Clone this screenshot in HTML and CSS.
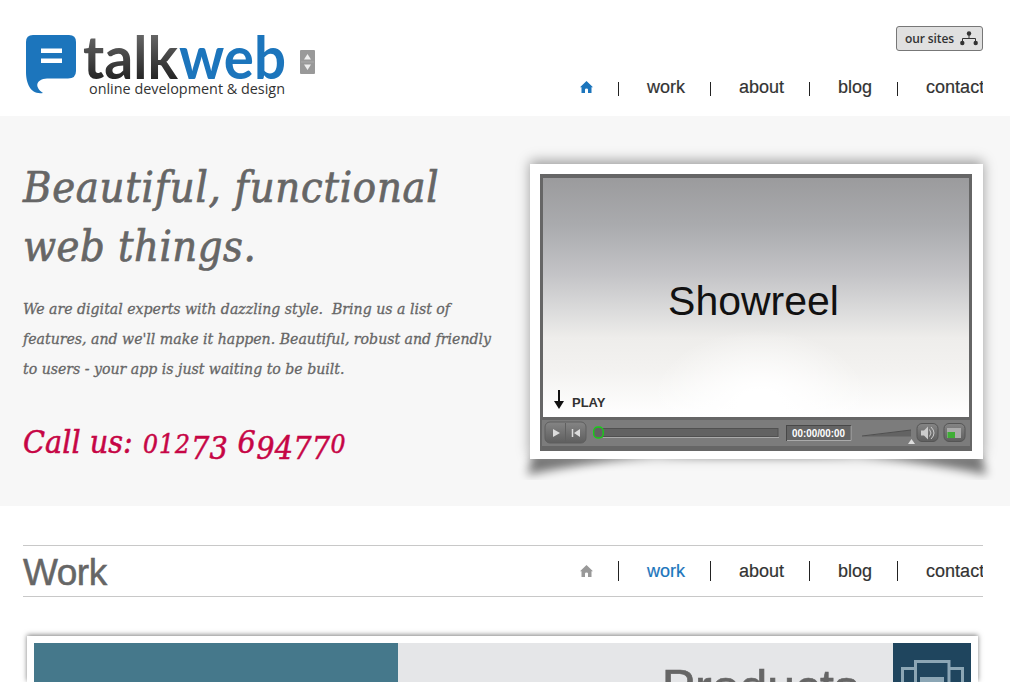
FILE: index.html
```html
<!DOCTYPE html>
<html lang="en">
<head>
<meta charset="utf-8">
<title>talkweb</title>
<link rel="stylesheet" href="styles.css">
</head>
<body>
<svg class="defs" width="0" height="0">
  <symbol id="home" viewBox="0 0 13 12"><path d="M6.500 0L13 6.300h-1.500V12H8V8.500q0-1-1.500-1T5 8.500V12H1.500V6.300H0z" fill="currentColor"/></symbol>
</svg>
<header class="header">
  <div class="brand">
    <svg class="logo" width="262" height="70" viewBox="0 0 262 70">
      <defs><linearGradient id="ink" x1="0" y1="0" x2="0" y2="1"><stop offset=".2" stop-color="#666"/><stop offset=".85" stop-color="#222"/></linearGradient></defs>
      <path d="M10 5H46Q53 5 53 12V41Q53 48.500 45 48.500H24C13 49 11 57 20 63C8 65 3 54 3 42V12Q3 5 10 5Z" fill="#1c75bc"/>
      <path d="M18 18.500h21v4.500H18zM18 28.500h21v4.500H18z" fill="#fff"/>
      <text class="word" x="60" y="49" textLength="95" lengthAdjust="spacingAndGlyphs" fill="url(#ink)">talk</text>
      <text class="word" x="156" y="49" textLength="107" lengthAdjust="spacingAndGlyphs" fill="#1c75bc">web</text>
      <text class="strap" x="66" y="64" textLength="196" lengthAdjust="spacingAndGlyphs">online development &amp; design</text>
    </svg>
    <svg class="switch" width="15" height="24" viewBox="0 0 15 24"><rect width="15" height="24" rx="1" fill="#999"/><path d="M4 9.500L7.500 4L11 9.500zM4 14.500h7L7.500 20z" fill="#eee"/><path d="M1 12h13" stroke="#aaa"/></svg>
  </div>
  <div class="tools">
    <a class="sites"><span>our sites</span>
      <svg width="18" height="15" viewBox="0 0 18 15"><path d="M9 3V7.500M2.500 12V7.500H15.500V12" fill="none" stroke="#333"/><g fill="#333"><circle cx="9" cy="2.500" r="2.200"/><circle cx="2.300" cy="12" r="2.200"/><circle cx="15.700" cy="12" r="2.200"/></g></svg>
    </a>
    <nav class="nav top">
      <svg class="home" width="13" height="12"><use href="#home"/></svg><i></i><a>work</a><i></i><a>about</a><i></i><a>blog</a><i></i><a>contact</a>
    </nav>
  </div>
</header>
<main>
<section class="hero">
  <div class="intro">
    <h1><span class="l1">Beautiful, functional</span><br><span class="l2">web things.</span></h1>
    <p>We are digital experts with dazzling style.&nbsp; Bring us a list of<br>features, and we'll make it happen. Beautiful, robust and friendly<br>to users - your app is just waiting to be built.</p>
    <div class="call"><span class="label">Call us:</span><span class="num"><b>012</b><s>73</s> 6<s>9477</s><b>0</b></span></div>
  </div>
  <div class="frame">
    <svg class="curl" width="500" height="45" viewBox="0 0 500 45">
      <defs><filter id="soft" x="-20%" y="-50%" width="140%" height="200%"><feGaussianBlur stdDeviation="5"/></filter></defs>
      <path d="M26 20H474L480 40Q360 15 250 15Q140 15 20 40Z" fill="#000" opacity=".5" filter="url(#soft)"/>
    </svg>
    <div class="player">
      <div class="screen"><strong>Showreel</strong><div class="play"><svg width="12" height="20" viewBox="0 0 12 20"><path d="M6 0V14" stroke="#111" stroke-width="2"/><path d="M1 11h10L6 19z" fill="#111"/></svg><span>PLAY</span></div></div>
      <svg class="controls" width="432" height="34" viewBox="0 0 432 34">
        <defs><linearGradient id="btn" x1="0" y1="0" x2="0" y2="1"><stop stop-color="#858585"/><stop offset="1" stop-color="#5e5e5e"/></linearGradient></defs>
        <rect width="432" height="34" fill="#666"/><rect x="2" y="3" width="428" height="26" fill="#7c7c7c"/>
        <rect x="5" y="5" width="41" height="21" rx="5" fill="url(#btn)" stroke="#5e5e5e"/><path d="M25.500 6v19" stroke="#606060"/>
        <path d="M13 12v8l7-4zM34 16l6-4v8z" fill="#ddd"/><path d="M32.500 12v8" stroke="#ddd" stroke-width="1.500"/>
        <rect x="56" y="11.500" width="182" height="8" fill="#626262" stroke="#505050"/><path d="M63 20.500H239" stroke="#aaa"/>
        <rect x="53.700" y="10" width="9.500" height="11" rx="4" fill="#626262" stroke="#15d015" stroke-width="1.400"/>
        <rect x="246.500" y="8.500" width="64" height="15" fill="#646464" stroke="#484848"/><path d="M247 23.500h64V9" fill="none" stroke="#aaa"/>
        <text class="time" x="252" y="20" textLength="53" lengthAdjust="spacingAndGlyphs">00:00/00:00</text>
        <path d="M322 19.500L371 13v6.500z" fill="#636363"/><path d="M322 19L371 13" stroke="#505050"/><path d="M368 27l3.500-5 3.500 5z" fill="#ddd"/>
        <rect x="377" y="6.500" width="21" height="18" rx="5" fill="url(#btn)" stroke="#555"/><path d="M381 13.500h3l4-4v13l-4-4h-3z" fill="#ccc"/><path d="M389.500 12.500q3 3.500 0 7M391 10q6 6 0 12" fill="none" stroke="#ccc"/>
        <rect x="404" y="6.500" width="21" height="18" rx="5" fill="url(#btn)" stroke="#555"/><rect x="407" y="11" width="14" height="10" fill="#aaa"/><rect x="407.500" y="15" width="7.500" height="6" fill="#3fae36"/>
      </svg>
    </div>
  </div>
</section>
<section class="work">
  <div class="bar"><h2>Work</h2>
    <nav class="nav">
      <svg class="home" width="13" height="12"><use href="#home"/></svg><i></i><a class="on">work</a><i></i><a>about</a><i></i><a>blog</a><i></i><a>contact</a>
    </nav>
  </div>
  <div class="card"><div class="teal"></div><div class="title">Products</div>
    <div class="tile"><svg width="78" height="39" viewBox="0 0 78 39"><path d="M22 25.500H9.500V40M56 25.500H69.500V40M22.500 40V18.500H56V40" fill="none" stroke="#8ba6b5" stroke-width="3"/><path d="M27 34h24v5H27z" fill="#8ba6b5"/></svg></div>
  </div>
</section>
</main>
</body>
</html>
```
FILE: styles.css
```css
* { box-sizing: border-box; }
body { margin: 0; height: 682px; overflow: hidden; background: #fff; color: #333; font-family: "Liberation Sans", Arial, sans-serif; }
h1, h2, p { margin: 0; font-weight: normal; }
.defs { display: block; height: 0; }
.header { height: 116px; padding: 0 27px 0 23px; display: flex; justify-content: space-between; }
.brand { display: flex; align-items: flex-start; gap: 15px; padding-top: 30px; }
.logo { overflow: visible; }
.switch { margin-top: 20px; }
.word { font: bold 60px Lato, sans-serif; }
.strap { font: 14.5px "Open Sans", sans-serif; fill: #333; }
.tools { display: flex; flex-direction: column; align-items: flex-end; padding-top: 26px; width: 403px; }
.sites { display: flex; align-items: center; justify-content: space-between; width: 87px; height: 25px; padding: 0 4px 0 8px; border: 1px solid #777; border-radius: 3px; background: #e0e0e0; font: 600 12px "Open Sans", sans-serif; letter-spacing: -0.1px; white-space: nowrap; }
.nav { display: flex; align-items: center; width: 403px; height: 50px; overflow: hidden; font-size: 18px; white-space: nowrap; }
.nav svg { margin-right: 25px; flex: none; color: #999; }
.nav i { width: 1px; height: 20px; flex: none; background: #222; margin-right: 28px; }
.nav a { margin-right: 25px; -webkit-text-stroke: .2px; }
.nav a:last-child { margin-right: 0; }
.nav .on { color: #1c75bc; }
.top { height: 24px; margin-top: 24px; }
.top svg { color: #1c75bc; }
.top i { height: 14px; margin-top: 4px; }
.hero { height: 390px; background: #f7f7f7; padding: 48px 27px 0 23px; display: flex; justify-content: space-between; }
.intro { width: 500px; font-family: Georgia, "DejaVu Serif", serif; font-stretch: condensed; font-style: italic; color: #666; white-space: nowrap; }
h1 { font-size: 43px; line-height: 59px; margin-top: -6px; -webkit-text-stroke: .7px; }
.l1 { letter-spacing: .75px; }
.l2 { letter-spacing: .5px; }
p { font-size: 15.7px; line-height: 30px; margin-top: 18px; -webkit-text-stroke: .3px; }
.call { color: #c60545; font-size: 32px; line-height: 48px; margin-top: 34px; height: 48px; display: flex; -webkit-text-stroke: .5px; }
.label { width: 120px; }
.num { letter-spacing: .25px; }
.num b { font-weight: normal; font-size: .82em; letter-spacing: 1px; }
.num s { text-decoration: none; position: relative; top: .2em; }
.frame { position: relative; z-index: 0; width: 453px; height: 295px; padding: 10px 11px 8px 10px; box-shadow: 0 -3px 12px rgba(0,0,0,.38); }
.frame::before { content: ""; position: absolute; inset: 0; z-index: 1; background: #fff; }
.curl { position: absolute; left: -23px; bottom: -21px; z-index: 0; }
.player { position: relative; z-index: 2; width: 432px; height: 277px; background: #666; padding-top: 4px; }
.screen { position: relative; height: 239px; margin: 0 3px; background: radial-gradient(ellipse 110px 75px at 51% 95%, #fff 20%, transparent), linear-gradient(#9b9b9d, #aaabae 20%, #c3c3c6 40%, #dcdcdc 56%, #eeedeb 67%, #f3f2f0 80%, #fff); display: flex; justify-content: center; align-items: center; }
.screen strong { font-weight: normal; font-size: 41px; color: #111; padding: 7px 5px 0 0; }
.play { position: absolute; left: 10px; bottom: 7px; display: flex; align-items: flex-end; gap: 7px; font-weight: bold; font-size: 13px; line-height: 14px; color: #333; }
.controls { display: block; }
.time { font: bold 10px "Liberation Sans", sans-serif; fill: #fff; }
.work { padding: 39px 27px 0 23px; }
.bar { display: flex; justify-content: space-between; height: 52px; border-top: 1px solid #c8c8c8; border-bottom: 1px solid #c8c8c8; }
h2 { font-size: 37px; line-height: 53px; letter-spacing: -0.5px; color: #666; -webkit-text-stroke: .5px; }
.card { height: 46px; margin: 39px 5px 0 4px; padding: 7px 7px 0; display: flex; box-shadow: 0 -1px 5px rgba(0,0,0,.5); }
.teal { width: 364px; background: #45788b; }
.title { flex: 1; background: #e5e6e8; color: #666; font-size: 50px; line-height: 91px; text-align: right; padding-right: 34px; overflow: hidden; -webkit-text-stroke: .7px; }
.tile { width: 78px; background: #1f455e; }
```
